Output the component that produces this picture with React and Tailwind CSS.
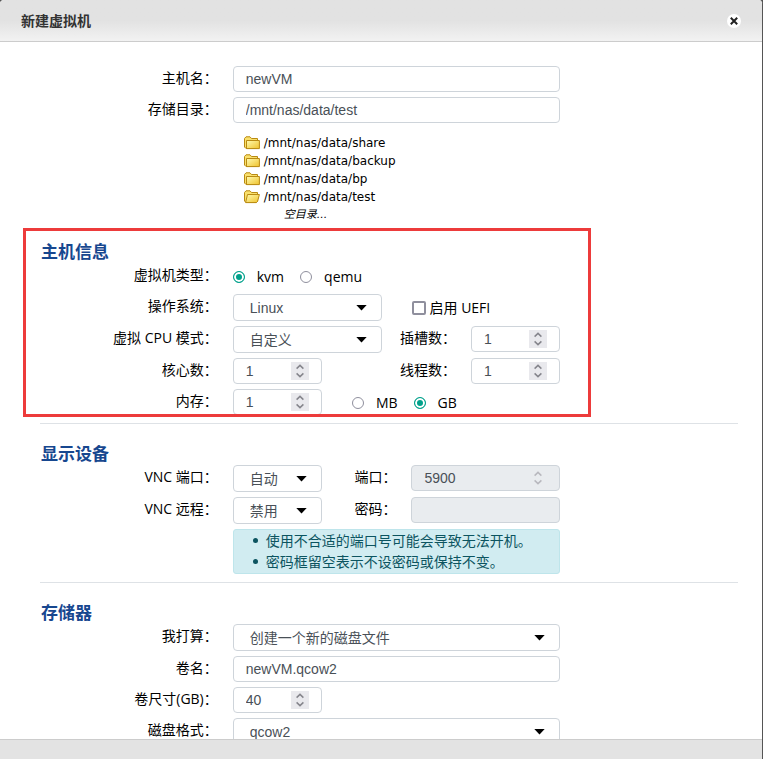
import { useState } from 'react'

const FOLDERS = [
  '/mnt/nas/data/share',
  '/mnt/nas/data/backup',
  '/mnt/nas/data/bp',
  '/mnt/nas/data/test',
]

const DEFAULTS = {
  name: 'newVM',
  dir: '/mnt/nas/data/test',
  type: 'kvm',
  os: 'Linux',
  uefi: false,
  cpuMode: '自定义',
  sockets: 1,
  cores: 1,
  threads: 1,
  memory: 1,
  unit: 'GB',
  vncPort: '自动',
  vncRemote: '禁用',
  port: 5900,
  password: '',
  plan: '创建一个新的磁盘文件',
  volume: 'newVM.qcow2',
  size: 40,
  format: 'qcow2',
}

export default function App() {
  const [form, setForm] = useState({ ...DEFAULTS })

  function set(key, value) {
    setForm(f => ({ ...f, [key]: value }))
  }

  function bind(key) {
    return { id: key, value: form[key], onChange: e => set(key, e.target.value) }
  }

  return (
    <div lang="zh-CN" className="h-screen bg-[#555] font-['Open_Sans','Noto_Sans_CJK_SC',sans-serif] text-sm text-black">
      <form className="flex h-full flex-col overflow-hidden rounded-t-[4px] border-r border-[#555] bg-white" onSubmit={e => e.preventDefault()}>
        <header className="flex h-[42px] shrink-0 items-center justify-between border-b border-[#ccc] bg-linear-to-b from-[#e2e2e2] from-50% to-[#f2f2f2] pr-[21px] pl-[21px]">
          <h1 className="font-bold text-[#333]">新建虚拟机</h1>
          <button type="button" aria-label="关闭" className="flex size-[14px] items-center justify-center rounded-full bg-white">
            <svg className="size-2" viewBox="0 0 8 8" fill="none" stroke="#222" strokeWidth="2">
              <path d="M0.8 0.8L7.2 7.2M7.2 0.8L0.8 7.2" />
            </svg>
          </button>
        </header>

        <main className="min-h-0 flex-1 overflow-y-auto pt-6 pr-2 pl-[39px] [scrollbar-width:none]">
          <div className="space-y-[5px]">
            <Row label="主机名" htmlFor="name">
              <Cell className="col-span-6"><TextInput {...bind('name')} /></Cell>
            </Row>
            <Row label="存储目录" htmlFor="dir">
              <Cell className="col-span-6"><TextInput {...bind('dir')} /></Cell>
            </Row>
          </div>
          <div className="grid grid-cols-12 pt-[11px]">
            <ul className="col-span-6 col-start-4 pl-[26px] font-['DejaVu_Sans','Noto_Sans_CJK_SC',sans-serif] text-xs leading-[18px]">
              {FOLDERS.map(path => (
                <li key={path}>
                  <button type="button" onClick={() => set('dir', path)} className="flex items-center gap-1">
                    <FolderIcon open={form.dir === path} />
                    {path}
                  </button>
                </li>
              ))}
              <li className="pl-10 text-[11px] leading-[18px] italic">空目录...</li>
            </ul>
          </div>

          <section className="relative pt-[17px] pb-2">
            <Heading>主机信息</Heading>
            <div className="space-y-[5px]">
              <Row label="虚拟机类型">
                <Cell className="col-span-6 flex h-[26px] items-center gap-4 pt-0.5">
                  <Radio name="type" value="kvm" form={form} set={set} />
                  <Radio name="type" value="qemu" form={form} set={set} />
                </Cell>
              </Row>
              <Row label="操作系统" htmlFor="os">
                <Cell className="col-span-3"><Select {...bind('os')} options={['Linux', 'Windows']} /></Cell>
                <Cell className="col-span-3">
                  <label className="flex h-[27px] items-center gap-1">
                    <input
                      type="checkbox"
                      checked={form.uefi}
                      onChange={e => set('uefi', e.target.checked)}
                      className="size-[14px] appearance-none rounded-[2px] border-2 border-[#8f8f9d] bg-white checked:bg-[#00a18b]"
                    />
                    启用 UEFI
                  </label>
                </Cell>
              </Row>
              <Row label="虚拟 CPU 模式" htmlFor="cpuMode">
                <Cell className="col-span-3"><Select {...bind('cpuMode')} options={['自定义', '主机直通']} /></Cell>
                <Label htmlFor="sockets" className="col-span-1">插槽数</Label>
                <Cell className="col-span-2"><NumberInput {...bind('sockets')} /></Cell>
              </Row>
              <Row label="核心数" htmlFor="cores">
                <Cell className="col-span-2"><NumberInput {...bind('cores')} /></Cell>
                <Label htmlFor="threads" className="col-span-2">线程数</Label>
                <Cell className="col-span-2"><NumberInput {...bind('threads')} /></Cell>
              </Row>
              <Row label="内存" htmlFor="memory">
                <Cell className="col-span-2"><NumberInput {...bind('memory')} /></Cell>
                <Cell className="col-span-4 flex h-[26px] items-center gap-4 pt-0.5">
                  <Radio name="unit" value="MB" form={form} set={set} />
                  <Radio name="unit" value="GB" form={form} set={set} />
                </Cell>
              </Row>
            </div>
            {/* highlight frame */}
            <div className="pointer-events-none absolute top-1 right-[163px] bottom-[6px] -left-4 border-3 border-[#ed3b3b]" />
          </section>

          <hr className="mr-4 ml-px border-[#dee2e6]" />
          <section className="pt-[19px] pb-2">
            <Heading>显示设备</Heading>
            <div className="space-y-[5px]">
              <Row label="VNC 端口" htmlFor="vncPort">
                <Cell className="col-span-2"><Select {...bind('vncPort')} options={['自动', '手动']} /></Cell>
                <Label htmlFor="port" className="col-span-1">端口</Label>
                <Cell className="col-span-3"><NumberInput {...bind('port')} disabled={form.vncPort === '自动'} /></Cell>
              </Row>
              <Row label="VNC 远程" htmlFor="vncRemote">
                <Cell className="col-span-2"><Select {...bind('vncRemote')} options={['禁用', '启用']} /></Cell>
                <Label htmlFor="password" className="col-span-1">密码</Label>
                <Cell className="col-span-3"><TextInput {...bind('password')} type="password" disabled={form.vncRemote === '禁用'} /></Cell>
              </Row>
              <div className="grid grid-cols-12">
                <Cell className="col-span-6 col-start-4">
                  <ul className="rounded-[3px] border border-[#bee5eb] bg-[#d1ecf1] pb-px pl-[19px] leading-[21px] text-[#0c5460]">
                    <Note>使用不合适的端口号可能会导致无法开机。</Note>
                    <Note>密码框留空表示不设密码或保持不变。</Note>
                  </ul>
                </Cell>
              </div>
            </div>
          </section>

          <hr className="mr-4 ml-px border-[#dee2e6]" />
          <section className="pt-[19px] pb-2">
            <Heading>存储器</Heading>
            <div className="space-y-[5px]">
              <Row label="我打算" htmlFor="plan">
                <Cell className="col-span-6"><Select {...bind('plan')} options={['创建一个新的磁盘文件', '使用已有的磁盘文件']} /></Cell>
              </Row>
              <Row label="卷名" htmlFor="volume">
                <Cell className="col-span-6"><TextInput {...bind('volume')} /></Cell>
              </Row>
              <Row label="卷尺寸(GB)" htmlFor="size">
                <Cell className="col-span-2"><NumberInput {...bind('size')} /></Cell>
              </Row>
              <Row label="磁盘格式" htmlFor="format">
                <Cell className="col-span-6"><Select {...bind('format')} options={['qcow2', 'raw']} /></Cell>
              </Row>
            </div>
          </section>
        </main>

        <footer className="h-5 shrink-0 border-t border-[#ccc] bg-[#e3e3e3]" />
      </form>
    </div>
  )
}

function Heading({ children }) {
  return <h2 className="pl-0.5 text-[17px] leading-[22px] font-bold text-[#17478f]">{children}</h2>
}

function Row({ label, htmlFor, children }) {
  return (
    <div className="grid grid-cols-12">
      <Label htmlFor={htmlFor} className="col-span-3">{label}</Label>
      {children}
    </div>
  )
}

function Label({ htmlFor, className, children }) {
  const Tag = htmlFor ? 'label' : 'span'
  return <Tag htmlFor={htmlFor} className={`text-right leading-6 whitespace-nowrap ${className}`}>{children}：</Tag>
}

function Cell({ className, children }) {
  return <div className={`px-[15px] ${className}`}>{children}</div>
}

function Note({ children }) {
  return <li className="flex items-center gap-2 before:size-[5px] before:rounded-full before:bg-current">{children}</li>
}

const control = "block w-full rounded-[4px] border border-[#ced4da] bg-white font-['Liberation_Sans','Noto_Sans_CJK_SC',sans-serif] text-sm text-[#495057] outline-none disabled:bg-[#e9ecef]"

function TextInput(props) {
  return <input type="text" {...props} className={`${control} h-[26px] px-3`} />
}

function NumberInput(props) {
  return (
    <div className="relative">
      <input
        type="number"
        {...props}
        className={`${control} h-[26px] px-3 [appearance:textfield] [&::-webkit-inner-spin-button]:appearance-none`}
      />
      <span className={`pointer-events-none absolute top-1 right-[13px] flex size-[18px] items-center justify-center ${props.disabled ? 'text-[#b8b8be]' : 'bg-[#e9e9ed] text-[#85858c]'}`}>
        <svg className="h-[14px] w-2" viewBox="0 0 8 14" fill="none" stroke="currentColor" strokeWidth="1.5">
          <path d="M0.6 4.6L4 1.4L7.4 4.6M0.6 9.4L4 12.6L7.4 9.4" />
        </svg>
      </span>
    </div>
  )
}

function Select({ options, ...props }) {
  return (
    <div className="relative">
      <select {...props} className={`${control} h-[27px] appearance-none px-4`}>
        {options.map(o => <option key={o}>{o}</option>)}
      </select>
      <svg className="pointer-events-none absolute top-[11px] right-[15px] h-[6px] w-[11px]" viewBox="0 0 11 6">
        <path d="M0.3 0H10.7L5.5 5.6Z" fill="#000" />
      </svg>
    </div>
  )
}

function Radio({ name, value, form, set }) {
  return (
    <label className="flex items-center gap-3">
      <input
        type="radio"
        name={name}
        checked={form[name] === value}
        onChange={() => set(name, value)}
        className="size-3 appearance-none rounded-full border border-[#8f8f9d] bg-white checked:border-[#00a18b] checked:bg-[#00a18b] checked:shadow-[inset_0_0_0_2px_white]"
      />
      {value}
    </label>
  )
}

function FolderIcon({ open }) {
  return (
    <svg className="h-[14px] w-4" viewBox="0 0 16 14">
      <defs>
        <linearGradient id="folder" x1="0" y1="0" x2="1" y2="1">
          <stop offset="0" stopColor="#fffbb0" />
          <stop offset="1" stopColor="#efc22c" />
        </linearGradient>
      </defs>
      <path d="M0.5 11V2.5L2 0.8H6L7.5 2.5H13.5V11.5L12 12.5H2Z" fill="#f9e06c" stroke="#b98a12" />
      {open
        ? <path d="M3.5 4.5H15.4L13.6 11.4L12.4 12.6H1.6Z" fill="url(#folder)" stroke="#b98a12" />
        : <path d="M2.5 4.5H15.4V12.6H2.5Z" fill="url(#folder)" stroke="#b98a12" />}
    </svg>
  )
}
